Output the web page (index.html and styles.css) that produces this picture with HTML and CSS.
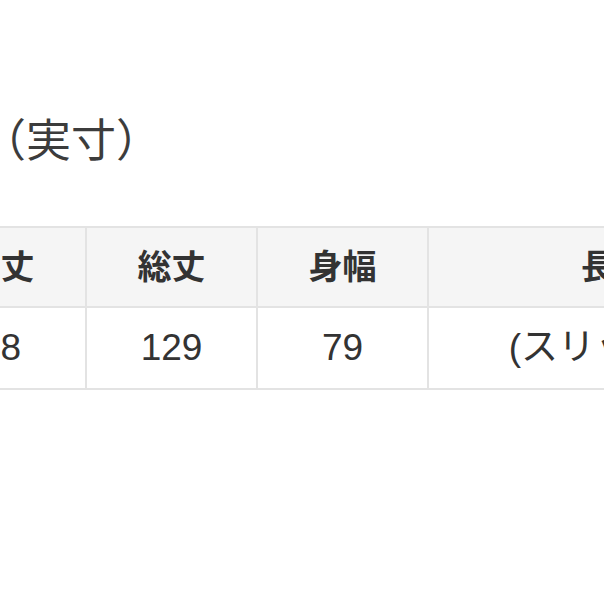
FILE: index.html
```html
<!DOCTYPE html>
<html lang="ja">
<head>
<meta charset="utf-8">
<link rel="stylesheet" href="styles.css">
</head>
<body>
<div class="page">
  <h2 class="title">（実寸）</h2>
  <div class="table-wrap">
    <table class="size-table">
      <colgroup>
        <col class="c1">
        <col class="c2">
        <col class="c3">
        <col class="c4">
      </colgroup>
      <thead>
        <tr>
          <th>着丈</th>
          <th>総丈</th>
          <th>身幅</th>
          <th>長袖丈</th>
        </tr>
      </thead>
      <tbody>
        <tr>
          <td>98</td>
          <td>129</td>
          <td>79</td>
          <td>(スリット含む)</td>
        </tr>
      </tbody>
    </table>
  </div>
</div>
</body>
</html>
```
FILE: styles.css
```css
html, body {
  margin: 0;
  padding: 0;
  background: #ffffff;
}
body {
  font-family: "Liberation Sans", "Noto Sans CJK JP", sans-serif;
  color: #333333;
  width: 604px;
  height: 604px;
  overflow: hidden;
}
.page {
  padding-top: 114px;
}
.title {
  margin: 0 0 0 -19px;
  font-size: 45px;
  font-weight: 400;
  line-height: 56px;
  color: #3c3c3c;
}
.table-wrap {
  margin-top: 56px;
  margin-left: -86px;
}
.size-table {
  border-collapse: collapse;
  table-layout: fixed;
  width: 921px;
}
.size-table th,
.size-table td {
  border: 2px solid #e3e3e3;
  text-align: center;
  padding: 0;
  line-height: 40px;
  color: #333333;
  white-space: nowrap;
}
.size-table th {
  height: 78px;
  background: #f5f5f5;
  font-weight: 700;
  font-size: 34px;
}
.size-table td {
  height: 80px;
  font-weight: 400;
  font-size: 37px;
  background: #ffffff;
}
.c1, .c2, .c3 { width: 171px; }
.c4 { width: 408px; }
```
